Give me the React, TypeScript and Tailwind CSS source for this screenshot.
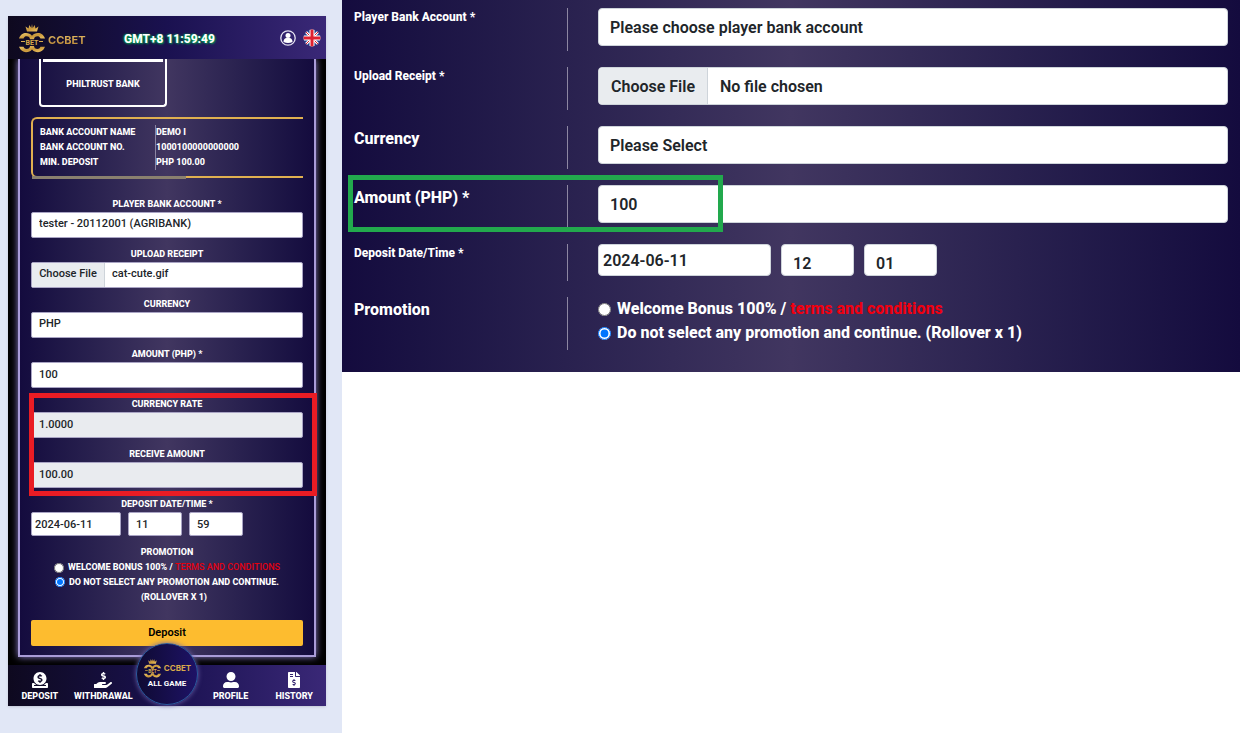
import React, { useState } from 'react';
import { FaDonate, FaFileInvoiceDollar, FaHandHoldingUsd, FaUserAlt } from 'react-icons/fa';

const panelGradient = 'bg-linear-to-r from-[#140b3e] via-[#413660] to-[#140b3e]';
const barGradient = 'bg-linear-to-r from-[#0e091f] via-[#1a1150] to-[#3a2877]';
const mobileInput =
  'block h-[26px] w-full appearance-none rounded-xs border border-[#a9a4c4] px-[7px] pb-0.5 text-[11px] font-medium text-[#212529] outline-none';
const desktopInput =
  'block h-[38px] w-full appearance-none rounded-sm border border-[#ced4da] bg-white px-[11px] pt-px text-[16px] font-semibold text-[#212529] outline-none';

const bankDetails = [
  { label: 'BANK ACCOUNT NAME', value: 'DEMO I' },
  { label: 'BANK ACCOUNT NO.', value: '1000100000000000' },
  { label: 'MIN. DEPOSIT', value: 'PHP 100.00' },
];

function Emblem({ className }: { className: string }) {
  return (
    <svg viewBox="0 0 28 30" className={className} aria-hidden="true">
      <defs>
        <linearGradient id="gold" x1="0" y1="0" x2="1" y2="1">
          <stop offset="0" stopColor="#f0cf72" />
          <stop offset="0.5" stopColor="#c8963a" />
          <stop offset="1" stopColor="#efc766" />
        </linearGradient>
      </defs>
      <path d="M9 8.500 7.500 3.500l3 2 .8-3.500 2 3L14 1l.7 4 2-3 .8 3.500 3-2L19 8.500Z" fill="url(#gold)" />
      <g fill="url(#gold)">
        <path d="M1 15.500C2.500 11.500 5 10 8 10c2.500 0 4.500 1 6 2.800C15.500 11 17.500 10 20 10c3 0 5.500 1.500 7 5.500h-4.500c-.8-1.700-1.700-2.300-3-2.300-2.200 0-3.300 1.300-3.500 3h-4c-.2-1.700-1.300-3-3.500-3-1.300 0-2.200.6-3 2.300Z" />
        <path d="M1 23.800h4.500c.8 1.500 1.700 2.200 3 2.200 2.200 0 3.300-1.200 3.500-3h4c.2 1.800 1.300 3 3.500 3 1.300 0 2.200-.7 3-2.200H27c-1.500 3.700-4 5.400-7 5.400-2.500 0-4.500-1-6-2.800-1.500 1.800-3.500 2.800-6 2.800-3 0-5.500-1.700-7-5.400Z" />
        <path d="M3 18h4v1H3Zm18 0h4v1h-4Z" />
      </g>
      <text x="14" y="22" textAnchor="middle" fontSize="7" fontWeight="700" fill="#d9a94b">
        BET
      </text>
    </svg>
  );
}

function UserBadge() {
  return (
    <svg viewBox="0 0 16 16" className="size-4" aria-hidden="true">
      <circle cx="8" cy="8" r="7.200" fill="none" stroke="#e6e3f2" strokeWidth="1.300" />
      <circle cx="8" cy="5.500" r="2.500" fill="#fff" />
      <path d="M3.500 12c0-2.500 1.500-4 3-4h3c1.500 0 3 1.500 3 4Q8 14 3.500 12Z" fill="#fff" />
    </svg>
  );
}

function UkFlag() {
  return (
    <svg viewBox="0 0 18 18" className="size-[18px]" aria-hidden="true">
      <clipPath id="round">
        <circle cx="9" cy="9" r="8.500" />
      </clipPath>
      <g clipPath="url(#round)">
        <path d="M0 0h18v18H0z" fill="#24408e" />
        <path d="m1 1 16 16M17 1 1 17" stroke="#fff" strokeWidth="2.500" />
        <path d="m1 1 16 16M17 1 1 17" stroke="#d8202f" strokeWidth="1" />
        <path d="M9 0v18M0 9h18" stroke="#fff" strokeWidth="5" />
        <path d="M9 0v18M0 9h18" stroke="#e0202f" strokeWidth="3" />
      </g>
    </svg>
  );
}

function MobileField({ id, label, children }: { id: string; label: string; children: React.ReactNode }) {
  return (
    <div>
      <label htmlFor={id} className="block pt-px text-center text-[9px] leading-[15px] font-extrabold">
        {label}
      </label>
      {children}
    </div>
  );
}

function MobileDeposit() {
  const [promo, setPromo] = useState('none');

  return (
    <section className="relative w-full text-white shadow-sm">
      <header className={`relative z-10 grid h-[43px] grid-cols-[1fr_auto_1fr] items-center pr-[5px] pl-2.5 ${barGradient}`}>
        <a href="#home" className="flex items-center gap-0.5">
          <Emblem className="h-[30px] w-7" />
          <span className="bg-linear-to-b from-[#f3d27a] to-[#b9832c] bg-clip-text pt-1 font-[Inter] text-[11px] leading-4 font-bold text-transparent">
            CCBET
          </span>
        </a>
        <time className="pt-0.5 text-[12px] font-extrabold [text-shadow:1px_1px_2px_#00a651,-1px_0_2px_#00a651]">
          GMT+8 11:59:49
        </time>
        <div className="flex items-center justify-end gap-[7px]">
          <button aria-label="Account">
            <UserBadge />
          </button>
          <button aria-label="Language">
            <UkFlag />
          </button>
        </div>
      </header>

      <div className="bg-black px-2.5 pb-2">
        <form
          onSubmit={(event) => event.preventDefault()}
          className={`border-x-2 border-b-2 border-[#a99cd8] px-[11px] pb-[9px] shadow-[0_0_7px_#8f7fd0] ${panelGradient}`}
        >
          <div className="ml-2 h-12 w-32 rounded-b-sm border-2 border-t-0 border-white px-0.5">
            <div className="h-[3px] bg-white" />
            <p className="pt-[15px] text-center text-[9px] leading-[15px] font-extrabold">PHILTRUST BANK</p>
          </div>

          <div className="mt-2.5 h-[61px] rounded-l-md border-y-2 border-l-2 border-[#e0b050] pt-1.5 pl-[7px]">
            <dl className="grid grid-cols-[116px_1fr] text-[9px] leading-[15px] font-extrabold">
              {bankDetails.map((row) => (
                <React.Fragment key={row.label}>
                  <dt className="border-r border-[#8c86a3]">{row.label}</dt>
                  <dd>{row.value}</dd>
                </React.Fragment>
              ))}
            </dl>
            <div className="-ml-2 mt-1.5 h-[3px] w-[154px] bg-[#8a806f]" />
          </div>

          <div className="mt-[18px] space-y-2">
            <MobileField id="m-account" label="PLAYER BANK ACCOUNT *">
              <select id="m-account" className={`${mobileInput} bg-white`}>
                <option>tester - 20112001 (AGRIBANK)</option>
              </select>
            </MobileField>
            <MobileField id="m-receipt" label="UPLOAD RECEIPT">
              <label className="relative flex h-[26px] overflow-hidden rounded-xs border border-[#a9a4c4] bg-white text-[11px] leading-[22px] font-medium text-[#212529]">
                <input id="m-receipt" type="file" className="sr-only" />
                <span className="w-[73px] border-r border-[#ced4da] bg-[#e9ecef] text-center">Choose File</span>
                <span className="pl-[7px]">cat-cute.gif</span>
              </label>
            </MobileField>
            <MobileField id="m-currency" label="CURRENCY">
              <select id="m-currency" className={`${mobileInput} bg-white`}>
                <option>PHP</option>
              </select>
            </MobileField>
            <MobileField id="m-amount" label="AMOUNT (PHP) *">
              <input id="m-amount" defaultValue="100" className={`${mobileInput} bg-white`} />
            </MobileField>
            <div className="relative space-y-2">
              <MobileField id="m-rate" label="CURRENCY RATE">
                <input id="m-rate" readOnly value="1.0000" className={`${mobileInput} bg-[#e9ebef]`} />
              </MobileField>
              <MobileField id="m-receive" label="RECEIVE AMOUNT">
                <input id="m-receive" readOnly value="100.00" className={`${mobileInput} bg-[#e9ebef]`} />
              </MobileField>
              <div className="pointer-events-none absolute -top-[3px] -right-3.5 -bottom-2 -left-0.5 z-10 border-5 border-[#ea1c24]" />
            </div>
            <MobileField id="m-date" label="DEPOSIT DATE/TIME *">
              <div className="flex gap-[7px]">
                <input
                  id="m-date"
                  defaultValue="2024-06-11"
                  className="h-6 w-[90px] rounded-xs border border-[#a9a4c4] bg-white px-[3px] text-[11px] font-medium text-[#212529]"
                />
                <input
                  aria-label="Hour"
                  defaultValue="11"
                  className="h-6 w-[54px] rounded-xs border border-[#a9a4c4] bg-white px-[7px] text-[11px] font-medium text-[#212529]"
                />
                <input
                  aria-label="Minute"
                  defaultValue="59"
                  className="h-6 w-[54px] rounded-xs border border-[#a9a4c4] bg-white px-[7px] text-[11px] font-medium text-[#212529]"
                />
              </div>
            </MobileField>
          </div>

          <fieldset className="mt-2 text-center text-[9px] leading-[15px] font-extrabold">
            <legend className="w-full pt-px">PROMOTION</legend>
            <div className="flex items-center justify-center gap-1">
              <input
                id="m-bonus"
                type="radio"
                name="m-promo"
                checked={promo === 'bonus'}
                onChange={() => setPromo('bonus')}
                className="size-2.5"
              />
              <label htmlFor="m-bonus">
                WELCOME BONUS 100% /{' '}
                <a href="#terms" className="font-medium text-[#e3000f]">
                  TERMS AND CONDITIONS
                </a>
              </label>
            </div>
            <div className="flex items-start justify-center gap-1">
              <input
                id="m-none"
                type="radio"
                name="m-promo"
                checked={promo === 'none'}
                onChange={() => setPromo('none')}
                className="mt-0.5 size-2.5"
              />
              <label htmlFor="m-none">
                DO NOT SELECT ANY PROMOTION AND CONTINUE.
                <br />
                (ROLLOVER X 1)
              </label>
            </div>
          </fieldset>

          <button className="mt-[15px] h-[26px] w-full rounded-xs bg-[#fdbc2f] text-[11px] font-semibold text-black">Deposit</button>
        </form>
      </div>

      <nav className={`grid h-[41px] grid-cols-5 pt-[7px] text-center text-[9px] leading-4 font-extrabold ${barGradient}`}>
        <a href="#deposit" className="flex flex-col items-center">
          <FaDonate className="size-4" />
          DEPOSIT
        </a>
        <a href="#withdrawal" className="flex flex-col items-center">
          <FaHandHoldingUsd className="size-[18px] h-4" />
          WITHDRAWAL
        </a>
        <a
          href="#games"
          className="absolute bottom-px left-1/2 flex size-[62px] -translate-x-1/2 flex-col items-center justify-center rounded-full border border-[#2b5a9e] bg-linear-to-r from-[#0f0a33] to-[#1e1266] text-[8px] leading-3 font-bold shadow-[0_0_5px_#6c61a8]"
        >
          <span className="flex items-center gap-0.5">
            <Emblem className="h-5 w-[19px]" />
            <span className="font-[Inter] text-[8px] text-[#d9a94b]">CCBET</span>
          </span>
          ALL GAME
        </a>
        <a href="#profile" className="col-start-4 flex flex-col items-center">
          <FaUserAlt className="size-4" />
          PROFILE
        </a>
        <a href="#history" className="flex flex-col items-center">
          <FaFileInvoiceDollar className="size-4" />
          HISTORY
        </a>
      </nav>
    </section>
  );
}

function DesktopRow({
  id,
  label,
  labelClass,
  rowClass,
  children,
}: {
  id?: string;
  label: string;
  labelClass: string;
  rowClass: string;
  children: React.ReactNode;
}) {
  return (
    <div className={`relative grid grid-cols-[214px_1fr] ${rowClass}`}>
      <div className="border-r border-[#8d87a2]">
        <label htmlFor={id} className={`block font-extrabold ${labelClass}`}>
          {label}
        </label>
      </div>
      <div className="pl-[30px]">{children}</div>
    </div>
  );
}

function DesktopDeposit() {
  const [promo, setPromo] = useState('none');
  const small = 'text-[12px] leading-[18px]';
  const large = 'pt-px text-[16px] leading-6';

  return (
    <form onSubmit={(event) => event.preventDefault()} className={`space-y-4 px-3 pt-2 pb-[22px] text-white ${panelGradient}`}>
      <DesktopRow id="d-account" label="Player Bank Account *" labelClass={small} rowClass="h-[43px]">
        <select id="d-account" className={desktopInput}>
          <option>Please choose player bank account</option>
        </select>
      </DesktopRow>
      <DesktopRow id="d-receipt" label="Upload Receipt *" labelClass={small} rowClass="h-[43px]">
        <label className="relative flex h-[38px] overflow-hidden rounded-sm border border-[#ced4da] bg-white text-[16px] leading-[38px] font-semibold text-[#212529]">
          <input id="d-receipt" type="file" className="sr-only" />
          <span className="w-[109px] border-r border-[#ced4da] bg-[#e9ecef] text-center">Choose File</span>
          <span className="pl-3">No file chosen</span>
        </label>
      </DesktopRow>
      <DesktopRow id="d-currency" label="Currency" labelClass={large} rowClass="h-[43px]">
        <select id="d-currency" className={desktopInput}>
          <option>Please Select</option>
        </select>
      </DesktopRow>
      <DesktopRow id="d-amount" label="Amount (PHP) *" labelClass={large} rowClass="h-[43px]">
        <input id="d-amount" defaultValue="100" className={desktopInput} />
        <div className="pointer-events-none absolute -top-2.5 -bottom-1 -left-1.5 w-[375px] border-5 border-[#22a94d]" />
      </DesktopRow>
      <DesktopRow id="d-date" label="Deposit Date/Time *" labelClass={small} rowClass="h-[37px]">
        <div className="flex gap-2.5 text-[16px] font-semibold text-[#212529]">
          <input id="d-date" defaultValue="2024-06-11" className="h-8 w-[173px] rounded-sm border border-[#ced4da] bg-white px-1" />
          <input aria-label="Hour" defaultValue="12" className="h-8 w-[73px] rounded-sm border border-[#ced4da] bg-white px-[11px] pt-1.5" />
          <input aria-label="Minute" defaultValue="01" className="h-8 w-[73px] rounded-sm border border-[#ced4da] bg-white px-[11px] pt-1.5" />
        </div>
      </DesktopRow>
      <DesktopRow label="Promotion" labelClass={large} rowClass="h-[53px]">
        <div className="text-[16px] leading-6 font-extrabold">
          <div className="flex items-center gap-1.5">
            <input
              id="d-bonus"
              type="radio"
              name="d-promo"
              checked={promo === 'bonus'}
              onChange={() => setPromo('bonus')}
              className="size-[13px]"
            />
            <label htmlFor="d-bonus">
              Welcome Bonus 100% /{' '}
              <a href="#terms" className="text-[#f00010]">
                terms and conditions
              </a>
            </label>
          </div>
          <div className="flex items-center gap-1.5">
            <input
              id="d-none"
              type="radio"
              name="d-promo"
              checked={promo === 'none'}
              onChange={() => setPromo('none')}
              className="size-[13px]"
            />
            <label htmlFor="d-none">Do not select any promotion and continue. (Rollover x 1)</label>
          </div>
        </div>
      </DesktopRow>
    </form>
  );
}

export default function App() {
  return (
    <div className="flex min-h-screen bg-white font-[Roboto,sans-serif]">
      <aside className="w-[342px] shrink-0 bg-[#e1e7f6] pt-4 pr-4 pl-2">
        <MobileDeposit />
      </aside>
      <main className="min-w-0 flex-1">
        <DesktopDeposit />
      </main>
    </div>
  );
}
